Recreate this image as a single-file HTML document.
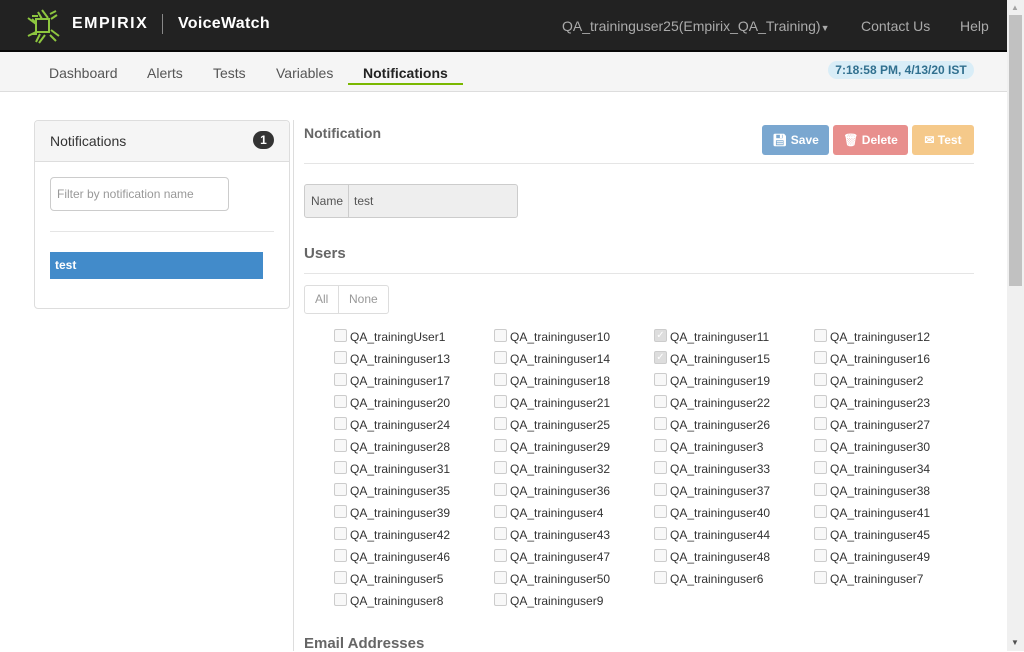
<!DOCTYPE html>
<html><head><meta charset="utf-8"><style>
*{box-sizing:border-box;margin:0;padding:0}
body{width:1024px;height:651px;overflow:hidden;background:#fff;font-family:"Liberation Sans",Arial,sans-serif;font-size:12px;color:#333;position:relative}
.a{position:absolute}
.hdr{left:0;top:0;width:1007px;height:52px;background:#222;border-bottom:2px solid #080808}
.nav{left:0;top:52px;width:1007px;height:40px;background:#f5f5f5;border-bottom:1px solid #ddd}
.nav span{position:absolute;top:13px;font-size:14px;color:#555}
.cb{width:13px;height:13px;border:1px solid #ccc;border-radius:2px;background:#f8f8f8}
.lbl{font-size:12px;color:#333}
.btn{top:125px;height:30px;border-radius:3px;color:#fff;font-size:12px;font-weight:bold;line-height:30px;text-align:center}
h3{position:absolute;font-size:15px;font-weight:bold;color:#666}
</style></head><body>
<div class="a hdr"></div>
<svg class="a" style="left:24px;top:8px" width="38" height="36" viewBox="0 0 38 36">
<g stroke="#8dc63f" stroke-width="2" fill="none">
<rect x="12" y="11" width="13" height="13"/>
<path d="M8 8h6M8 11l4 4M4 10l8 6M8 26h5M4 28l8-4M14 4l4 7M18 2l6 8M26 6l6-3M27 11l6-4M27 22l8 6M26 27l6 6M16 26l-4 8M21 27l-6 8"/>
</g></svg>
<div class="a" style="left:72px;top:15px;color:#fff;font-size:16px;font-weight:bold;letter-spacing:1.5px">EMPIRIX</div>
<div class="a" style="left:162px;top:14px;width:1px;height:20px;background:#888"></div>
<div class="a" style="left:178px;top:15px;color:#fff;font-size:16px;font-weight:bold;letter-spacing:.3px">VoiceWatch</div>
<div class="a" style="left:562px;top:18px;color:#aaa;font-size:14px">QA_traininguser25(Empirix_QA_Training)<span style="font-size:9px">&#9660;</span></div>
<div class="a" style="left:861px;top:18px;color:#aaa;font-size:14px">Contact Us</div>
<div class="a" style="left:960px;top:18px;color:#aaa;font-size:14px">Help</div>
<div class="a nav">
<span style="left:49px">Dashboard</span><span style="left:147px">Alerts</span><span style="left:213px">Tests</span><span style="left:276px">Variables</span><span style="left:363px;color:#222;font-weight:bold;font-weight:600">Notifications</span>
<div class="a" style="left:348px;top:31px;width:115px;height:2px;background:#7ab800"></div>
<div class="a" style="left:828px;top:9px;width:146px;height:18px;border-radius:9px;background:#d9edf7;color:#31708f;font-weight:bold;font-size:12px;text-align:center;line-height:18px">7:18:58 PM, 4/13/20 IST</div>
</div>
<!-- scrollbar -->
<div class="a" style="left:1007px;top:0;width:17px;height:651px;background:#f0f0f0"></div>
<div class="a" style="left:1009px;top:15px;width:13px;height:271px;background:#c1c1c1"></div>
<div class="a" style="left:1011px;top:3px;font-size:8px;color:#a3a3a3">&#9650;</div>
<div class="a" style="left:1011px;top:638px;font-size:8px;color:#505050">&#9660;</div>
<!-- left panel -->
<div class="a" style="left:34px;top:120px;width:256px;height:189px;border:1px solid #ddd;border-radius:4px"></div>
<div class="a" style="left:35px;top:121px;width:254px;height:41px;background:#f5f5f5;border-bottom:1px solid #ddd;border-radius:4px 4px 0 0"></div>
<div class="a" style="left:50px;top:133px;font-size:14px;color:#333">Notifications</div>
<div class="a" style="left:253px;top:131px;width:21px;height:18px;border-radius:9px;background:#333;color:#fff;font-weight:bold;font-size:12px;text-align:center;line-height:18px">1</div>
<div class="a" style="left:50px;top:177px;width:179px;height:34px;border:1px solid #ccc;border-radius:4px;color:#999;padding:9px 6px;font-size:12px">Filter by notification name</div>
<div class="a" style="left:50px;top:231px;width:224px;height:1px;background:#e5e5e5"></div>
<div class="a" style="left:50px;top:252px;width:213px;height:27px;background:#428bca;color:#fff;font-weight:bold;padding:6px 5px;font-size:12px">test</div>
<div class="a" style="left:293px;top:120px;width:1px;height:531px;background:#ddd"></div>
<!-- right -->
<h3 style="left:304px;top:125px;font-size:14px">Notification</h3>
<div class="a btn" style="left:762px;width:67px;background:#7aa7d0"><span style="font-size:12px">&#128190;&#xFE0E;</span> Save</div>
<div class="a btn" style="left:833px;width:75px;background:#e88f8d">&#128465;&#xFE0E; Delete</div>
<div class="a btn" style="left:912px;width:62px;background:#f5c98a">&#9993; Test</div>
<div class="a" style="left:304px;top:163px;width:670px;height:1px;background:#e5e5e5"></div>
<div class="a" style="left:304px;top:184px;width:214px;height:34px;border:1px solid #ccc;border-radius:3px;background:#eee"></div>
<div class="a" style="left:348px;top:185px;width:1px;height:32px;background:#ccc"></div>
<div class="a" style="left:311px;top:194px;color:#555">Name</div>
<div class="a" style="left:354px;top:194px;color:#555">test</div>
<h3 style="left:304px;top:245px">Users</h3>
<div class="a" style="left:304px;top:273px;width:670px;height:1px;background:#e5e5e5"></div>
<div class="a" style="left:304px;top:285px;width:85px;height:29px;border:1px solid #ddd;border-radius:3px"></div>
<div class="a" style="left:338px;top:286px;width:1px;height:27px;background:#ddd"></div>
<div class="a" style="left:315px;top:292px;color:#999">All</div>
<div class="a" style="left:349px;top:292px;color:#999">None</div>
<div id="u"></div>
<h3 style="left:304px;top:635px">Email Addresses</h3>
<div class="a" style="left:0;top:0">
</div>
<!-- users -->
<div class="a" style="left:0;top:0;width:0;height:0">
</div>
<div>
<div class="a cb" style="left:334px;top:329px"></div><div class="a lbl" style="left:350px;top:330px">QA_trainingUser1</div>
<div class="a cb" style="left:494px;top:329px"></div><div class="a lbl" style="left:510px;top:330px">QA_traininguser10</div>
<div class="a cb" style="left:654px;top:329px;background:#ddd;color:#fff;font-size:10px;line-height:11px;text-align:center">&#10003;</div><div class="a lbl" style="left:670px;top:330px">QA_traininguser11</div>
<div class="a cb" style="left:814px;top:329px"></div><div class="a lbl" style="left:830px;top:330px">QA_traininguser12</div>

<div class="a cb" style="left:334px;top:351px"></div><div class="a lbl" style="left:350px;top:352px">QA_traininguser13</div>
<div class="a cb" style="left:494px;top:351px"></div><div class="a lbl" style="left:510px;top:352px">QA_traininguser14</div>
<div class="a cb" style="left:654px;top:351px;background:#ddd;color:#fff;font-size:10px;line-height:11px;text-align:center">&#10003;</div><div class="a lbl" style="left:670px;top:352px">QA_traininguser15</div>
<div class="a cb" style="left:814px;top:351px"></div><div class="a lbl" style="left:830px;top:352px">QA_traininguser16</div>

<div class="a cb" style="left:334px;top:373px"></div><div class="a lbl" style="left:350px;top:374px">QA_traininguser17</div>
<div class="a cb" style="left:494px;top:373px"></div><div class="a lbl" style="left:510px;top:374px">QA_traininguser18</div>
<div class="a cb" style="left:654px;top:373px"></div><div class="a lbl" style="left:670px;top:374px">QA_traininguser19</div>
<div class="a cb" style="left:814px;top:373px"></div><div class="a lbl" style="left:830px;top:374px">QA_traininguser2</div>

<div class="a cb" style="left:334px;top:395px"></div><div class="a lbl" style="left:350px;top:396px">QA_traininguser20</div>
<div class="a cb" style="left:494px;top:395px"></div><div class="a lbl" style="left:510px;top:396px">QA_traininguser21</div>
<div class="a cb" style="left:654px;top:395px"></div><div class="a lbl" style="left:670px;top:396px">QA_traininguser22</div>
<div class="a cb" style="left:814px;top:395px"></div><div class="a lbl" style="left:830px;top:396px">QA_traininguser23</div>

<div class="a cb" style="left:334px;top:417px"></div><div class="a lbl" style="left:350px;top:418px">QA_traininguser24</div>
<div class="a cb" style="left:494px;top:417px"></div><div class="a lbl" style="left:510px;top:418px">QA_traininguser25</div>
<div class="a cb" style="left:654px;top:417px"></div><div class="a lbl" style="left:670px;top:418px">QA_traininguser26</div>
<div class="a cb" style="left:814px;top:417px"></div><div class="a lbl" style="left:830px;top:418px">QA_traininguser27</div>

<div class="a cb" style="left:334px;top:439px"></div><div class="a lbl" style="left:350px;top:440px">QA_traininguser28</div>
<div class="a cb" style="left:494px;top:439px"></div><div class="a lbl" style="left:510px;top:440px">QA_traininguser29</div>
<div class="a cb" style="left:654px;top:439px"></div><div class="a lbl" style="left:670px;top:440px">QA_traininguser3</div>
<div class="a cb" style="left:814px;top:439px"></div><div class="a lbl" style="left:830px;top:440px">QA_traininguser30</div>

<div class="a cb" style="left:334px;top:461px"></div><div class="a lbl" style="left:350px;top:462px">QA_traininguser31</div>
<div class="a cb" style="left:494px;top:461px"></div><div class="a lbl" style="left:510px;top:462px">QA_traininguser32</div>
<div class="a cb" style="left:654px;top:461px"></div><div class="a lbl" style="left:670px;top:462px">QA_traininguser33</div>
<div class="a cb" style="left:814px;top:461px"></div><div class="a lbl" style="left:830px;top:462px">QA_traininguser34</div>

<div class="a cb" style="left:334px;top:483px"></div><div class="a lbl" style="left:350px;top:484px">QA_traininguser35</div>
<div class="a cb" style="left:494px;top:483px"></div><div class="a lbl" style="left:510px;top:484px">QA_traininguser36</div>
<div class="a cb" style="left:654px;top:483px"></div><div class="a lbl" style="left:670px;top:484px">QA_traininguser37</div>
<div class="a cb" style="left:814px;top:483px"></div><div class="a lbl" style="left:830px;top:484px">QA_traininguser38</div>

<div class="a cb" style="left:334px;top:505px"></div><div class="a lbl" style="left:350px;top:506px">QA_traininguser39</div>
<div class="a cb" style="left:494px;top:505px"></div><div class="a lbl" style="left:510px;top:506px">QA_traininguser4</div>
<div class="a cb" style="left:654px;top:505px"></div><div class="a lbl" style="left:670px;top:506px">QA_traininguser40</div>
<div class="a cb" style="left:814px;top:505px"></div><div class="a lbl" style="left:830px;top:506px">QA_traininguser41</div>

<div class="a cb" style="left:334px;top:527px"></div><div class="a lbl" style="left:350px;top:528px">QA_traininguser42</div>
<div class="a cb" style="left:494px;top:527px"></div><div class="a lbl" style="left:510px;top:528px">QA_traininguser43</div>
<div class="a cb" style="left:654px;top:527px"></div><div class="a lbl" style="left:670px;top:528px">QA_traininguser44</div>
<div class="a cb" style="left:814px;top:527px"></div><div class="a lbl" style="left:830px;top:528px">QA_traininguser45</div>

<div class="a cb" style="left:334px;top:549px"></div><div class="a lbl" style="left:350px;top:550px">QA_traininguser46</div>
<div class="a cb" style="left:494px;top:549px"></div><div class="a lbl" style="left:510px;top:550px">QA_traininguser47</div>
<div class="a cb" style="left:654px;top:549px"></div><div class="a lbl" style="left:670px;top:550px">QA_traininguser48</div>
<div class="a cb" style="left:814px;top:549px"></div><div class="a lbl" style="left:830px;top:550px">QA_traininguser49</div>

<div class="a cb" style="left:334px;top:571px"></div><div class="a lbl" style="left:350px;top:572px">QA_traininguser5</div>
<div class="a cb" style="left:494px;top:571px"></div><div class="a lbl" style="left:510px;top:572px">QA_traininguser50</div>
<div class="a cb" style="left:654px;top:571px"></div><div class="a lbl" style="left:670px;top:572px">QA_traininguser6</div>
<div class="a cb" style="left:814px;top:571px"></div><div class="a lbl" style="left:830px;top:572px">QA_traininguser7</div>

<div class="a cb" style="left:334px;top:593px"></div><div class="a lbl" style="left:350px;top:594px">QA_traininguser8</div>
<div class="a cb" style="left:494px;top:593px"></div><div class="a lbl" style="left:510px;top:594px">QA_traininguser9</div>
</div>
</body></html>
